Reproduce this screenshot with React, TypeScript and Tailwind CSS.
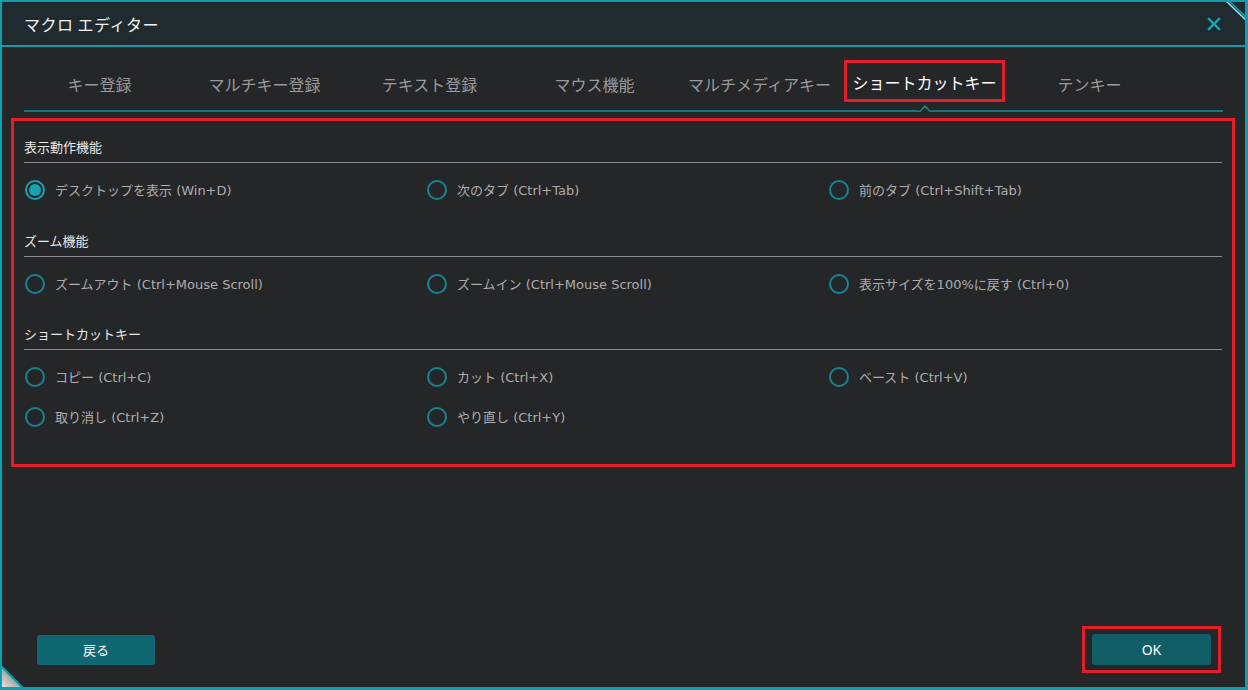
const tabs = [
  "キー登録",
  "マルチキー登録",
  "テキスト登録",
  "マウス機能",
  "マルチメディアキー",
  "ショートカットキー",
  "テンキー",
];

type Section = { title: string; rows: string[][]; mtop: string };

const sections: Section[] = [
  {
    title: "表示動作機能",
    mtop: "mt-[17px]",
    rows: [["デスクトップを表示 (Win+D)", "次のタブ (Ctrl+Tab)", "前のタブ (Ctrl+Shift+Tab)"]],
  },
  {
    title: "ズーム機能",
    mtop: "mt-[22px]",
    rows: [
      [
        "ズームアウト (Ctrl+Mouse Scroll)",
        "ズームイン (Ctrl+Mouse Scroll)",
        "表示サイズを100%に戻す (Ctrl+0)",
      ],
    ],
  },
  {
    title: "ショートカットキー",
    mtop: "mt-[21px]",
    rows: [
      ["コピー (Ctrl+C)", "カット (Ctrl+X)", "ベースト (Ctrl+V)"],
      ["取り消し (Ctrl+Z)", "やり直し (Ctrl+Y)"],
    ],
  },
];

function Radio({ label, checked }: { label: string; checked?: boolean }) {
  return (
    <label className="flex items-center h-[40px] cursor-pointer">
      {/* circle */}
      <span
        className={`ml-[1px] w-5 h-5 rounded-full border-2 flex items-center justify-center ${
          checked ? "border-[#17a3b1]" : "border-[#168591]"
        }`}
      >
        {checked && <span className="w-[12px] h-[12px] rounded-full bg-[#17a3b1]" />}
      </span>
      <span
        className="ml-[10px] pt-[2px] text-[13px] leading-[18px] text-[#adadad]"
        style={{ fontFamily: '"DejaVu Sans", "Noto Sans CJK JP", sans-serif' }}
      >
        {label}
      </span>
    </label>
  );
}

export default function App() {
  const active = 5;
  return (
    <div
      className="relative w-[1248px] h-[690px] flex flex-col bg-[#252628] border-t-2 border-l-2 border-r-[3px] border-b-[3px] border-[#119eac] overflow-hidden"
      style={{ fontFamily: '"Noto Sans CJK JP", "Noto Sans", sans-serif' }}
    >
      {/* title bar */}
      <header className="h-[45px] shrink-0 flex items-center justify-between pl-[22px] pr-[24px] bg-[#1f2b2f] border-b-2 border-[#119eac]">
        <h1 className="text-[16px] text-[#f2f2f2] tracking-[0.5px]">マクロ エディター</h1>
        <svg viewBox="0 0 14 14" className="w-[14px] h-[14px]" stroke="#18a6b6" strokeWidth={2.4} strokeLinecap="square">
          <path d="M2 2L12 12M12 2L2 12" />
        </svg>
      </header>

      {/* tabs */}
      <nav className="flex ml-[15px] mt-[13px] h-[42px] shrink-0">
        {tabs.map((t, i) => (
          <div key={t} className="w-[165px] flex items-center justify-center">
            {i === active ? (
              <span className="h-[42px] border-[3px] border-[#e31e2a] px-[5px] pt-[2px] flex items-center text-[16px] text-white">
                {t}
              </span>
            ) : (
              <span className="pt-[5px] text-[16px] text-[#9a9a9a]">{t}</span>
            )}
          </div>
        ))}
      </nav>

      {/* tab underline with caret */}
      <div className="flex items-end mx-[22px] mt-[3px] h-[7px] shrink-0">
        <div className="w-[893px] h-[2px] bg-[#1b7480]" />
        <svg viewBox="0 0 16 7" className="w-[16px] h-[7px] shrink-0" fill="none" stroke="#1b8490" strokeWidth={1.6}>
          <path d="M0 6.2H3L8 1.2L13 6.2H16" />
        </svg>
        <div className="flex-1 h-[2px] bg-[#1b7480]" />
      </div>

      {/* main content */}
      <main className="ml-[9px] mr-[10px] mt-[6px] border-[3px] border-[#e31e2a] px-[10px] pb-[27px]">
        {sections.map((s) => (
          <section key={s.title} className={s.mtop}>
            <h2 className="text-[13px] leading-[18px] text-[#e8e8e8] pb-[6px] border-b border-[#8c8c8c]">
              {s.title}
            </h2>
            <div className="mt-[7px]">
              {s.rows.map((row, ri) => (
                <div key={ri} className="grid grid-cols-[402px_402px_1fr]">
                  {row.map((label, ci) => (
                    <Radio key={label} label={label} checked={s.title === "表示動作機能" && ri === 0 && ci === 0} />
                  ))}
                </div>
              ))}
            </div>
          </section>
        ))}
      </main>

      {/* footer */}
      <footer className="mt-auto flex items-center justify-between pl-[35px] pr-[24px] pb-[14px]">
        <button className="w-[118px] h-[30px] rounded-[3px] bg-[#0e6771] text-[13px] text-white">戻る</button>
        <div className="border-[3px] border-[#e31e2a] px-[7px] py-[5px]">
          <button
            className="w-[119px] h-[31px] rounded-[3px] bg-[#125e67] text-[14px] text-white"
            style={{ fontFamily: '"Noto Sans", sans-serif' }}
          >
            OK
          </button>
        </div>
      </footer>

      {/* corner decorations */}
      <svg className="absolute top-[-2px] right-[-3px] w-[24px] h-[24px]" viewBox="0 0 24 24">
        <path d="M0 0H24V24Z" fill="#1f2b2f" />
        <path d="M1 0L24 22" stroke="#8fe3ea" strokeWidth={1.5} />
        <path d="M4 0L24 19" stroke="#119eac" strokeWidth={1.5} />
      </svg>
      <svg className="absolute bottom-[-3px] left-[-2px] w-[26px] h-[26px]" viewBox="0 0 26 26">
        <defs>
          <linearGradient id="cg" x1="0" y1="1" x2="0.7" y2="0.3">
            <stop offset="0" stopColor="#f2f2f2" />
            <stop offset="1" stopColor="#8a8a8a" />
          </linearGradient>
        </defs>
        <path d="M0 2L24 26H0Z" fill="url(#cg)" />
        <path d="M0 1L25 26" stroke="#119eac" strokeWidth={2} />
      </svg>
    </div>
  );
}
